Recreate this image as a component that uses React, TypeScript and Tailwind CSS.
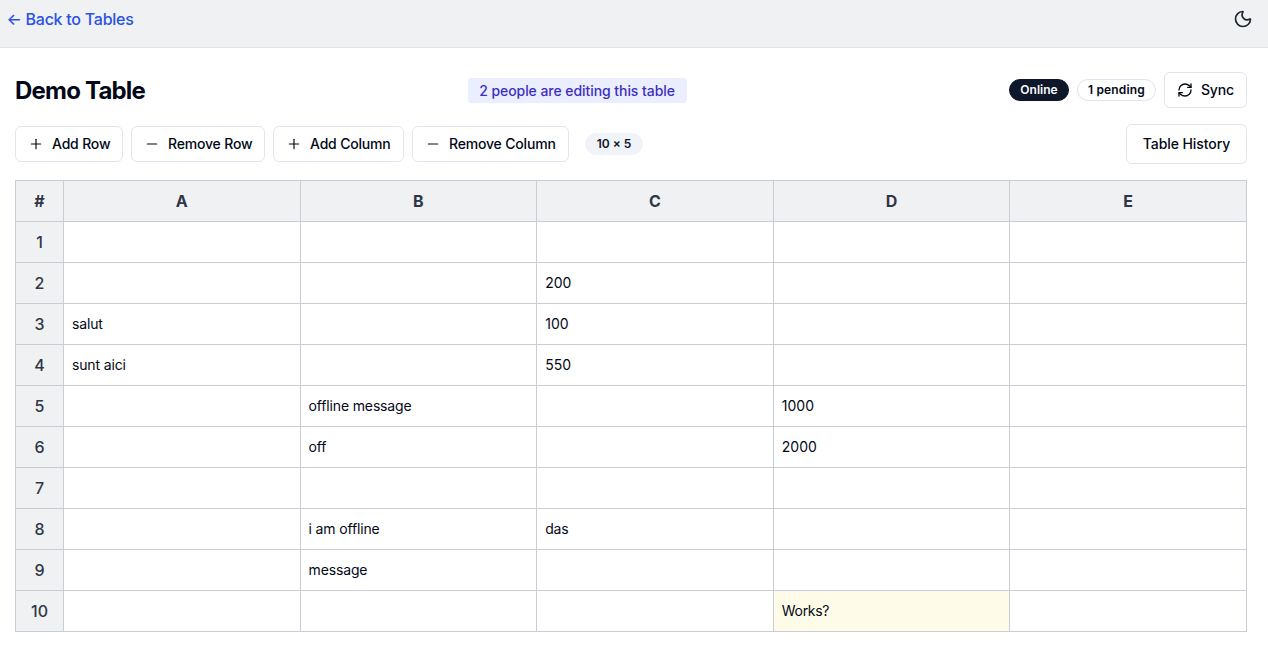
import type { ReactNode } from "react";
import { Minus, Moon, Plus, RefreshCw } from "lucide-react";

const columns = ["A", "B", "C", "D", "E"];

const rows: string[][] = [
  ["", "", "", "", ""],
  ["", "", "200", "", ""],
  ["salut", "", "100", "", ""],
  ["sunt aici", "", "550", "", ""],
  ["", "offline message", "", "1000", ""],
  ["", "off", "", "2000", ""],
  ["", "", "", "", ""],
  ["", "i am offline", "das", "", ""],
  ["", "message", "", "", ""],
  ["", "", "", "Works?", ""],
];

function ToolButton({ icon, width, children }: { icon: ReactNode; width: string; children: ReactNode }) {
  return (
    <button
      className={`flex h-9 items-center gap-2 whitespace-nowrap rounded-md border border-[#e2e4f0] bg-white px-3 text-sm font-medium tracking-[-0.18px] text-[#020817] ${width}`}
    >
      {icon}
      {children}
    </button>
  );
}

function cellClass(value: string) {
  if (value === "Works?") return "bg-[#fefce8] tracking-[-0.3px]";
  return /^\d*$/.test(value) ? "" : "tracking-[-0.15px]";
}

export default function App() {
  return (
    <div className="h-[652px] overflow-hidden bg-white font-['Inter',sans-serif] text-[#020817]">
      <header className="flex h-12 items-start justify-between border-b border-[#dfe2e6] bg-[#f0f1f3] pl-[6.5px] pr-2 pt-[7px]">
        <a href="#" className="text-base font-medium tracking-[-0.25px] text-[#2a52e4]">
          ← Back to Tables
        </a>
        <button className="mr-[7px] mt-0.5" aria-label="Toggle theme">
          <Moon className="size-5 text-[#1f2430]" strokeWidth={2} />
        </button>
      </header>

      <main className="pl-[15px] pr-[21px] pt-6">
        <div className="flex h-9 items-center justify-between">
          <h1 className="pt-0.5 text-2xl font-bold tracking-[-0.8px]">Demo Table</h1>
          <div className="flex h-[25px] w-[219px] items-center justify-center whitespace-nowrap rounded-[3px] bg-[#ebeefe] pt-px text-sm font-medium tracking-[-0.06px] text-[#3c2fbf]">
            2 people are editing this table
          </div>
          <div className="flex items-center gap-2">
            <span className="w-[60px] rounded-full border border-[#0f172a] bg-[#0f172a] py-0.5 text-center text-xs font-semibold text-[#f8fafc]">
              Online
            </span>
            <span className="w-[79px] rounded-full border border-[#e2e4f0] py-0.5 text-center text-xs font-semibold tracking-[0.15px]">
              1 pending
            </span>
            <ToolButton width="w-[83px]" icon={<RefreshCw className="size-4 shrink-0" />}>
              Sync
            </ToolButton>
          </div>
        </div>

        <div className="mt-4 flex h-10 items-center justify-between">
          <div className="flex items-center gap-2">
            <ToolButton width="w-[108px]" icon={<Plus className="size-4 shrink-0" strokeWidth={1.75} />}>
              Add Row
            </ToolButton>
            <ToolButton width="w-[134px]" icon={<Minus className="size-4 shrink-0" strokeWidth={1.75} />}>
              Remove Row
            </ToolButton>
            <ToolButton width="w-[131px]" icon={<Plus className="size-4 shrink-0" strokeWidth={1.75} />}>
              Add Column
            </ToolButton>
            <ToolButton width="w-[157px]" icon={<Minus className="size-4 shrink-0" strokeWidth={1.75} />}>
              Remove Column
            </ToolButton>
            <span className="ml-2 w-[58px] rounded-full border border-[#f0f3f8] bg-[#f0f3f8] py-0.5 text-center text-xs font-semibold text-[#0f172a]">
              10 × 5
            </span>
          </div>
          <button className="h-10 w-[121px] whitespace-nowrap rounded-md border border-[#e2e4f0] text-sm font-medium tracking-[-0.08px]">
            Table History
          </button>
        </div>

        <table className="mt-4 w-full table-fixed border-collapse">
          <colgroup>
            <col className="w-12" />
            {columns.map((name) => (
              <col key={name} />
            ))}
          </colgroup>
          <thead>
            <tr className="h-[41px] bg-[#f0f1f3] text-[#2f3747]">
              <th className="border border-[#c9cdd5] p-0 font-bold">#</th>
              {columns.map((name) => (
                <th key={name} className="border border-[#c9cdd5] p-0 font-bold">
                  {name}
                </th>
              ))}
            </tr>
          </thead>
          <tbody>
            {rows.map((cells, r) => (
              <tr key={r} className="h-[41px]">
                <td className="border border-[#c9cdd5] bg-[#f0f1f3] p-0 text-center font-medium text-[#2f3747]">
                  {r + 1}
                </td>
                {cells.map((value, c) => (
                  <td key={c} className={`border border-[#c9cdd5] px-2 py-0 text-sm ${cellClass(value)}`}>
                    {value}
                  </td>
                ))}
              </tr>
            ))}
          </tbody>
        </table>
      </main>
    </div>
  );
}
